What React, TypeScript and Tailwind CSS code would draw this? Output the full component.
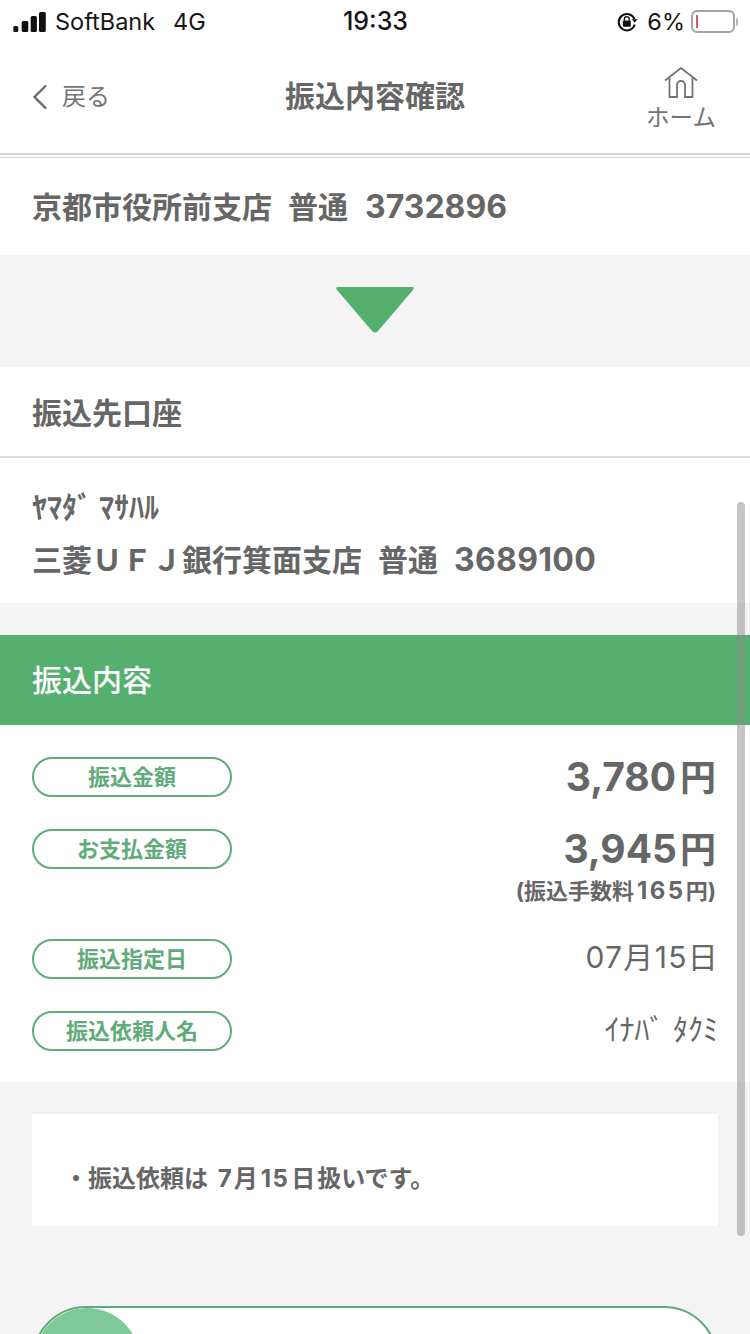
const font = "font-['Inter','Noto_Sans_CJK_JP',sans-serif]";

function Pill({ label }: { label: string }) {
  return (
    <div className="flex h-[40px] w-[200px] shrink-0 items-center justify-center rounded-full border-2 border-[#5fab79] bg-white text-[22px] font-bold leading-none text-[#5fab79]">
      {label}
    </div>
  );
}

function Signal() {
  return (
    <svg width="34" height="22" viewBox="0 0 34 22" fill="#111">
      <rect x="0.300" y="15" width="5" height="6" rx="1.500" />
      <rect x="8.700" y="10" width="6.600" height="11" rx="1.500" />
      <rect x="17.700" y="5" width="6.200" height="16" rx="1.500" />
      <rect x="26" y="1" width="6.800" height="20" rx="1.500" />
    </svg>
  );
}

function LockIcon() {
  return (
    <svg width="22" height="22" viewBox="0 0 22 22" fill="none">
      <path d="M18.500 8 A8.200 8.200 0 1 0 18.800 13.500" stroke="#111" strokeWidth="2" />
      <path d="M15.800 8.200 L21.600 8.200 L18.700 11.600 Z" fill="#111" />
      <rect x="6.800" y="9.600" width="8" height="6.200" rx="1" fill="#111" />
      <path d="M8.400 9.800 V8 a2.400 2.400 0 0 1 4.800 0 V9.800" stroke="#111" strokeWidth="1.400" />
    </svg>
  );
}

function Battery() {
  return (
    <div className="flex items-center">
      <div className="flex h-[23px] w-[44px] items-center rounded-[6px] border-2 border-[#a3a3a3] pl-[3px]">
        <div className="h-[13px] w-[2px] bg-[#c9605c]" />
      </div>
      <div className="ml-[1px] h-[8px] w-[2px] rounded-r bg-[#b5b5b5]" />
    </div>
  );
}

function HomeIcon() {
  return (
    <svg width="34" height="31" viewBox="0 0 34 31" fill="none" stroke="#737373" strokeWidth="1.800">
      <path d="M1 13.500 L17 1 L33 13.500" />
      <path d="M5.500 10.500 V30 H13 V18 a4 4 0 0 1 8 0 V30 H28.500 V10.500" />
    </svg>
  );
}

function Row({ label, children, className }: { label: string; children: React.ReactNode; className?: string }) {
  return (
    <div className={"flex items-start justify-between " + (className ?? "")}>
      <Pill label={label} />
      {children}
    </div>
  );
}

export default function App() {
  return (
    <div className={"relative h-[1334px] w-[750px] overflow-hidden bg-[#f4f4f4] text-[#666666] " + font}>
      <div className="bg-white">
        <div className="flex h-[42px] items-center justify-between pl-[13px] pr-[12px] pt-[1px] text-[23.500px] text-[#161616]">
          <div className="flex w-[250px] items-center">
            <Signal />
            <span className="ml-[8px] leading-none">SoftBank</span>
            <span className="ml-[18px] leading-none">4G</span>
          </div>
          <span className="text-[25px] font-medium leading-none">19:33</span>
          <div className="flex w-[250px] items-center justify-end">
            <LockIcon />
            <span className="ml-[9px] mr-[6px] leading-none">6%</span>
            <Battery />
          </div>
        </div>
        <div className="flex h-[111px] items-center justify-between pb-[2px] pl-[32px] pr-[34px]">
          <div className="flex w-[150px] items-center text-[#757575]">
            <svg width="16" height="26" viewBox="0 0 16 26" fill="none" stroke="#6b6b6b" strokeWidth="2.400">
              <path d="M14 1.500 L2.500 13 L14 24.500" />
            </svg>
            <span className="ml-[14px] text-[24px] leading-none">戻る</span>
          </div>
          <h1 className="mb-[2px] ml-[2px] text-[30px] font-bold leading-none text-[#666666]">振込内容確認</h1>
          <div className="flex w-[150px] flex-col items-end pt-[4px]">
            <div className="flex w-[70px] flex-col items-center">
              <HomeIcon />
              <span className="mt-[8px] whitespace-nowrap text-[23.500px] leading-none text-[#757575]">ホーム</span>
            </div>
          </div>
        </div>
      </div>
      <div className="h-[2px] bg-[#d4d4d4]" />
      <div className="h-[2px] bg-white" />
      <div className="h-[1px] bg-[#d8d8d8]" />

      <div className="flex h-[97px] items-center bg-white px-[32px] text-[30px] font-bold leading-none whitespace-pre">
        <span>京都市役所前支店</span>
        <span className="ml-[16px]">普通</span>
        <span className="ml-[17px] text-[32px]">3732896</span>
      </div>

      <div className="flex h-[112px] items-start justify-center pt-[32px]">
        <svg width="78" height="46" viewBox="0 0 78 46">
          <path d="M2 0 H76 Q79 0 77 3 L42 44 Q39 47 36 44 L1 3 Q-1 0 2 0 Z" fill="#55b06f" />
        </svg>
      </div>

      <div className="flex h-[91px] items-center border-b-2 border-[#dddddd] bg-white px-[32px] pt-[2px] text-[30px] font-bold leading-none">
        振込先口座
      </div>
      <div className="flex h-[145px] flex-col bg-white px-[32px] pt-[31px]">
        <span className="whitespace-pre text-[30px] font-bold leading-[36px]">ﾔﾏﾀﾞ ﾏｻﾊﾙ</span>
        <div className="mt-[17px] flex items-center whitespace-pre text-[30px] font-bold leading-[36px]">
          <span>三菱ＵＦＪ銀行箕面支店</span>
          <span className="ml-[16px]">普通</span>
          <span className="ml-[16px] text-[32px] tracking-[0.300px]">3689100</span>
        </div>
      </div>

      <div className="mt-[32px] flex h-[90px] items-center bg-[#55b06f] px-[32px] text-[30px] font-medium leading-none text-white">
        振込内容
      </div>

      <div className="h-[357px] bg-white pl-[32px] pr-[34px] pt-[32px]">
        <Row label="振込金額" className="h-[40px]">
          <div className="flex items-baseline">
            <span className="text-[39px] font-bold leading-[40px]">3,780</span>
            <span className="ml-[4px] text-[36px] font-bold leading-[40px]">円</span>
          </div>
        </Row>
        <Row label="お支払金額" className="mt-[32px] h-[78px]">
          <div className="flex flex-col items-end">
            <div className="flex items-baseline">
              <span className="text-[39px] font-bold leading-[40px]">3,945</span>
              <span className="ml-[3px] text-[36px] font-bold leading-[40px]">円</span>
            </div>
            <span className="mt-[9px] whitespace-nowrap text-[22px] font-bold leading-[24px]">
              (振込手数料<span className="ml-[3px] text-[24px] tracking-[2.500px]">165</span>円)
            </span>
          </div>
        </Row>
        <Row label="振込指定日" className="mt-[32px] h-[40px]">
          <span className="-mr-[3px] whitespace-nowrap text-[30px] leading-[36px] tracking-[1.300px]">07月15日</span>
        </Row>
        <Row label="振込依頼人名" className="mt-[32px] h-[40px]">
          <span className="-mr-[2px] whitespace-pre text-[30px] leading-[36px]">ｲﾅﾊﾞ ﾀｸﾐ</span>
        </Row>
      </div>

      <div className="mx-[32px] mt-[32px] flex h-[112px] items-center bg-white pl-[32px] pt-[18px] text-[24px] font-bold leading-none whitespace-pre">
        ・振込依頼は <span className="ml-[4px]">7</span>
        <span className="ml-[2px]">月</span>
        <span className="ml-[3px] tracking-[1.500px]">15</span>
        <span className="ml-[2px]">日</span>
        <span className="ml-[2px]">扱いです。</span>
      </div>

      <div className="relative mx-[32px] mt-[80px] h-[110px] overflow-hidden rounded-[54px] border-2 border-[#5fab79] bg-white">
        <div className="absolute left-0 top-0 h-[106px] w-[106px] rounded-full bg-[#7fc998]" />
      </div>

      <div className="absolute left-[737px] top-[502px] h-[734px] w-[8px] rounded-full bg-[#8c8c8c]/50" />
    </div>
  );
}
